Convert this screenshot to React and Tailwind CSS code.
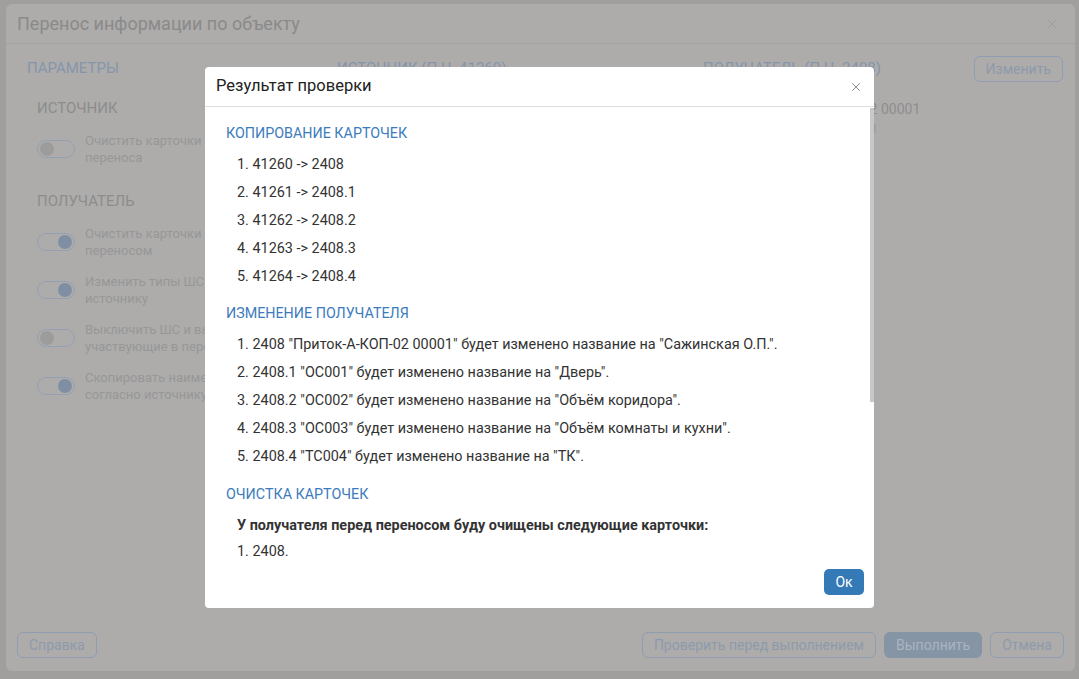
import { X } from "lucide-react";

const copies = [
  "41260 -> 2408",
  "41261 -> 2408.1",
  "41262 -> 2408.2",
  "41263 -> 2408.3",
  "41264 -> 2408.4",
];

const renames = [
  '2408 "Приток-А-КОП-02 00001" будет изменено название на "Сажинская О.П.".',
  '2408.1 "ОС001" будет изменено название на "Дверь".',
  '2408.2 "ОС002" будет изменено название на "Объём коридора".',
  '2408.3 "ОС003" будет изменено название на "Объём комнаты и кухни".',
  '2408.4 "ТС004" будет изменено название на "ТК".',
];

const receiverOpts = [
  { on: true, t: "Очистить карточки перед", b: "переносом" },
  { on: true, t: "Изменить типы ШС и", b: "источнику" },
  { on: false, t: "Выключить ШС и выходы", b: "участвующие в переносе" },
  { on: true, t: "Скопировать наименования", b: "согласно источнику" },
];

function Toggle({ on }) {
  return (
    <div className="h-[18px] w-[38px] shrink-0 rounded-full border border-[#94a0b2] flex items-center px-[2px]">
      <div className={on ? "ml-auto h-[14px] w-[14px] rounded-full bg-[#7f8fa3]" : "h-[14px] w-[14px] rounded-full bg-[#9c9c9c]"} />
    </div>
  );
}

function Opt({ on, t, b }) {
  return (
    <div className="flex items-center gap-[10px]">
      <Toggle on={on} />
      {/* the modal covers the rest of these labels */}
      <div className="w-[121px] overflow-hidden text-[13px] leading-[17px] text-[#979797] whitespace-nowrap">
        <div>{t}</div>
        <div>{b}</div>
      </div>
    </div>
  );
}

function GhostBtn({ children }) {
  return (
    <div className="h-[26px] px-[11px] rounded-[6px] border border-[#8f9db1] flex items-center text-[14px] text-[#8d9aab]">
      {children}
    </div>
  );
}

function Heading({ children, className = "" }) {
  return <h3 className={"text-[14.3px] leading-5 text-[#3c7bbd] uppercase " + className}>{children}</h3>;
}

function Items({ list }) {
  return (
    <ol className="mt-[12px] pl-[11px]">
      {list.map((s, i) => (
        <li key={i} className="mb-[8px] text-[14.4px] leading-5 text-[#333] whitespace-nowrap">
          {i + 1}. {s}
        </li>
      ))}
    </ol>
  );
}

export default function App() {
  return (
    <div className="relative h-[679px] w-full bg-[#a19f9e] pt-[4px] pr-[4px] pb-[8px] pl-[6px]" style={{ fontFamily: "Roboto, 'Noto Sans', sans-serif" }}>
      {/* background dialog, already dimmed */}
      <div className="h-full rounded-[6px] bg-[#adacab] flex flex-col">
        <div className="h-[40px] flex items-center justify-between px-[11px] border-b border-[#a2a1a0]">
          <span className="text-[18px] text-[#8a8a8a]">Перенос информации по объекту</span>
          <X size={14} strokeWidth={1.5} className="text-[#999] mr-[5px]" />
        </div>

        <div className="flex-1 flex pl-[21px] pr-[12px] pt-[12px]">
          <div className="w-[310px]">
            <div className="h-[25px] flex items-center text-[15px] text-[#8595aa] uppercase">Параметры</div>
            <div className="pl-[10px]">
              <div className="mt-[16px] text-[15px] text-[#8c8c8c] uppercase">Источник</div>
              <div className="mt-[12px]">
                <Opt on={false} t="Очистить карточки источника после" b="переноса" />
              </div>
              <div className="mt-[24px] text-[15px] text-[#8c8c8c] uppercase">Получатель</div>
              <div className="mt-[13px] flex flex-col gap-[14px]">
                {receiverOpts.map((o) => (
                  <Opt key={o.t} {...o} />
                ))}
              </div>
            </div>
          </div>
          <div className="w-[366px]">
            <div className="h-[25px] flex items-center text-[15px] text-[#8595aa] uppercase">Источник (П.Ч. 41260)</div>
          </div>
          <div className="flex-1">
            <div className="h-[25px] flex items-center text-[15px] text-[#8595aa] uppercase">Получатель (П.Ч. 2408)</div>
            <div className="mt-[18px] pl-[23px] text-[14px] text-[#8e8e8e] whitespace-nowrap">2408. Приток-А-КОП-02 00001</div>
            <div className="pl-[3px] text-[12px] text-[#979797] whitespace-nowrap">ОС001, ОС002, ОС003, ТС004, 1</div>
          </div>
          <div>
            <GhostBtn>Изменить</GhostBtn>
          </div>
        </div>

        <div className="flex items-center px-[11px] pb-[13px]">
          <GhostBtn>Справка</GhostBtn>
          <div className="ml-auto flex gap-[8px]">
            <GhostBtn>Проверить перед выполнением</GhostBtn>
            <div className="h-[26px] px-[12px] rounded-[6px] bg-[#8595a6] flex items-center text-[14px] text-[#aab4bf]">Выполнить</div>
            <GhostBtn>Отмена</GhostBtn>
          </div>
        </div>
      </div>

      {/* result modal */}
      <div className="absolute left-[205px] top-[67px] w-[669px] h-[541px] rounded-[4px] bg-white flex flex-col overflow-hidden">
        <div className="h-[40px] shrink-0 flex items-center justify-between pl-[11px] pr-[11px] border-b border-[#dedede]">
          <span className="text-[16.5px] text-[#222]">Результат проверки</span>
          <X size={14} strokeWidth={1.3} className="text-[#666]" />
        </div>
        <div className="relative h-[455px] shrink-0 overflow-hidden pl-[21px] pt-[16px]">
          <Heading>Копирование карточек</Heading>
          <Items list={copies} />
          <Heading className="mt-[16px]">Изменение получателя</Heading>
          <Items list={renames} />
          <Heading className="mt-[17px]">Очистка карточек</Heading>
          <div className="pl-[11px]">
            <p className="mt-[12px] text-[14.4px] leading-5 font-bold text-[#333]">
              У получателя перед переносом буду очищены следующие карточки:
            </p>
            <p className="mt-[6px] text-[14.4px] leading-5 text-[#333]">1. 2408.</p>
          </div>
          <div className="absolute right-0 top-[1px] h-[294px] w-[4px] bg-[#c8c8c8]" />
        </div>
        <div className="flex-1 flex items-start justify-end pr-[10px] pt-[7px]">
          <div className="h-[26px] w-[40px] rounded-[5px] bg-[#337ab7] flex items-center justify-center text-[14px] text-white">Ок</div>
        </div>
      </div>
    </div>
  );
}
